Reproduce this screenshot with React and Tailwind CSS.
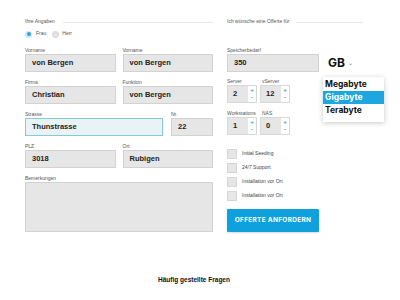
import React from "react";

const labelCls = "h-[6px] mb-[1px] text-[5px] leading-[6px] text-[#555] font-['Liberation_Sans',sans-serif]";
const inputCls = "h-[18px] bg-[#e6e6e6] border border-[#d2d2d2] flex items-center pl-[6px] text-[7.5px] font-bold text-[#222] font-['Liberation_Sans',sans-serif]";

function Field({ label, value, focused }) {
  return (
    <div className="flex flex-col">
      <div className={labelCls}>{label}</div>
      <div
        className={
          focused
            ? "h-[18px] bg-[#e9f3f5] border border-[#86c9d8] flex items-center pl-[6px] text-[7.5px] font-bold text-[#222] font-['Liberation_Sans',sans-serif]"
            : inputCls
        }
      >
        {value}
      </div>
    </div>
  );
}

function Stepper({ value }) {
  return (
    <div className="flex h-[18px] w-[30px] border border-[#d8d8d8]">
      <div className="w-[20px] bg-[#e6e6e6] flex items-center pl-[5px] text-[7.5px] font-bold text-[#222] font-['Liberation_Sans',sans-serif]">
        {value}
      </div>
      <div className="flex-1 bg-white flex flex-col items-center justify-center text-[#2a98d6] text-[6px] leading-[7px] font-bold font-['Liberation_Sans',sans-serif]">
        <span>+</span>
        <span>-</span>
      </div>
    </div>
  );
}

function Check({ label }) {
  return (
    <div className="h-[10px] flex items-center gap-[5px]">
      <div className="w-[10px] h-[10px] bg-[#e6e6e6] border border-[#d6d6d6]" />
      <span className="text-[5px] text-[#444] font-['Liberation_Sans',sans-serif]">{label}</span>
    </div>
  );
}

export default function App() {
  return (
    <div className="w-[400px] h-[300px] bg-white overflow-hidden font-['Liberation_Sans',sans-serif]">
      <div className="pt-[18px] pl-[25px] flex gap-[14px]">
        {/* Left column */}
        <div className="w-[188px] flex flex-col">
          <div className="h-[8px] flex items-center gap-[8px]">
            <span className="text-[5px] text-[#555]">Ihre Angaben</span>
            <div className="flex-1 h-px bg-[#e8e8e8]" />
          </div>
          <div className="mt-[4px] h-[8px] flex items-center">
            <div className="w-[7px] h-[7px] rounded-full bg-[#cfe9f8] flex items-center justify-center">
              <div className="w-[4px] h-[4px] rounded-full bg-[#2ea3e6]" />
            </div>
            <span className="ml-[4px] text-[5px] text-[#555]">Frau</span>
            <div className="ml-[6px] w-[7px] h-[7px] rounded-full bg-[#e2e2e2] border border-[#d4d4d4]" />
            <span className="ml-[3px] text-[5px] text-[#555]">Herr</span>
          </div>
          <div className="mt-[9px] flex flex-col gap-[7px]">
            <div className="grid grid-cols-2 gap-x-[7px]">
              <Field label="Vorname" value="von Bergen" />
              <Field label="Vorname" value="von Bergen" />
            </div>
            <div className="grid grid-cols-2 gap-x-[7px]">
              <Field label="Firma" value="Christian" />
              <Field label="Funktion" value="von Bergen" />
            </div>
            <div className="grid grid-cols-[138px_1fr] gap-x-[8px]">
              <Field label="Strasse" value="Thunstrasse" focused />
              <Field label="Nr." value="22" />
            </div>
            <div className="grid grid-cols-2 gap-x-[7px]">
              <Field label="PLZ" value="3018" />
              <Field label="Ort" value="Rubigen" />
            </div>
            <div className="flex flex-col">
              <div className={labelCls}>Bemerkungen</div>
              <div className="h-[50px] bg-[#e6e6e6] border border-[#d2d2d2]" />
            </div>
          </div>
        </div>

        {/* Right column */}
        <div className="w-[136px] flex flex-col">
          <div className="h-[8px] flex items-center gap-[7px]">
            <span className="text-[5px] text-[#555]">Ich wünsche eine Offerte für</span>
            <div className="flex-1 h-px bg-[#e8e8e8]" />
          </div>
          <div className="mt-[21px] flex flex-col">
            <div className={labelCls}>Speicherbedarf</div>
            <div className="relative flex items-center">
              <div className={inputCls + " w-[92px]"}>350</div>
              <span className="ml-[9px] text-[12px] font-bold text-[#111] font-['Inter',sans-serif] leading-none">GB</span>
              <span className="ml-[3px] text-[6px] text-[#777] leading-none">⌄</span>
              <div className="absolute left-[96px] top-[23px] w-[61px] bg-white shadow-[0_1px_5px_rgba(0,0,0,0.22)] pt-[1px] pb-[5px] z-10">
                <div className="h-[13px] flex items-center pl-[2px] text-[8.5px] font-bold text-[#111] font-['Inter',sans-serif]">Megabyte</div>
                <div className="h-[13px] flex items-center pl-[2px] text-[8.5px] font-bold text-white bg-[#1ea6e0] font-['Inter',sans-serif]">Gigabyte</div>
                <div className="h-[13px] flex items-center pl-[2px] text-[8.5px] font-bold text-[#111] font-['Inter',sans-serif]">Terabyte</div>
              </div>
            </div>
          </div>
          <div className="mt-[6px] flex gap-[3px]">
            <div className="flex flex-col">
              <div className={labelCls}>Server</div>
              <Stepper value="2" />
            </div>
            <div className="flex flex-col">
              <div className={labelCls + " pl-[2px]"}>vServer</div>
              <Stepper value="12" />
            </div>
          </div>
          <div className="mt-[7px] flex gap-[3px]">
            <div className="flex flex-col">
              <div className={labelCls}>Workstations</div>
              <Stepper value="1" />
            </div>
            <div className="flex flex-col">
              <div className={labelCls + " pl-[2px]"}>NAS</div>
              <Stepper value="0" />
            </div>
          </div>
          <div className="mt-[14px] flex flex-col gap-[4px]">
            <Check label="Initial Seeding" />
            <Check label="24/7 Support" />
            <Check label="Installation vor Ort" />
            <Check label="Installation vor Ort" />
          </div>
          <div className="mt-[8px] w-[92px] h-[23px] bg-[#0fa0de] rounded-[1px] flex items-center justify-center text-white text-[6.5px] font-bold tracking-[0.3px] font-['Inter',sans-serif] shadow-[0_1px_2px_rgba(0,0,0,0.15)]">
            OFFERTE ANFORDERN
          </div>
        </div>
      </div>
      <div className="mt-[44px] ml-[25px] w-[338px] text-center text-[6.5px] leading-[8px] font-bold text-[#111]">
        Häufig gestellte Fragen
      </div>
    </div>
  );
}
